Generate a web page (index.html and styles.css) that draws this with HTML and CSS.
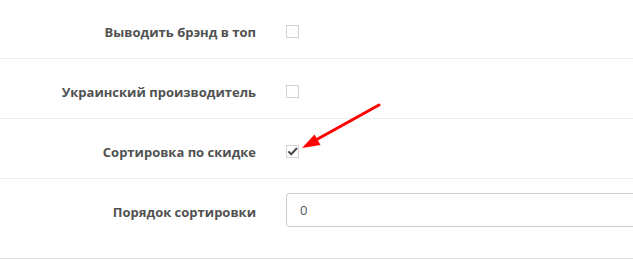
FILE: index.html
```html
<!DOCTYPE html>
<html lang="ru">
<head>
<meta charset="utf-8">
<link rel="stylesheet" href="styles.css">
</head>
<body>
<div class="form">
  <div class="row row-first">
    <label class="label">Выводить брэнд в топ</label>
    <div class="field"><span class="box"></span></div>
  </div>
  <div class="row">
    <label class="label">Украинский производитель</label>
    <div class="field"><span class="box"></span></div>
  </div>
  <div class="row">
    <label class="label">Сортировка по скидке</label>
    <div class="field"><span class="box checked"><svg viewBox="0 0 13 13" width="13" height="13"><path d="M2.4 6.4 L5.2 9.3 L11 3" fill="none" stroke="#4a4a4a" stroke-width="2"/></svg></span></div>
  </div>
  <div class="row row-last">
    <label class="label">Порядок сортировки</label>
    <div class="field field-clip"><div class="input">0</div></div>
  </div>
</div>
<svg class="arrow" width="633" height="259" viewBox="0 0 633 259">
  <line x1="379" y1="105" x2="314" y2="141" stroke="#f00" stroke-width="3" stroke-linecap="round"/>
  <polygon points="302,148 314.5,134.5 320.5,145" fill="#f00"/>
</svg>
</body>
</html>
```

FILE: styles.css
```css
html, body {
  margin: 0;
  padding: 0;
  background: #fff;
  overflow: hidden;
}
body {
  position: relative;
  width: 633px;
  height: 259px;
  font-family: "Open Sans", "DejaVu Sans", sans-serif;
}
.form {
  display: flex;
  flex-direction: column;
}
.row {
  display: flex;
  align-items: flex-start;
  padding: 14px 0;
  min-height: 31px;
  border-bottom: 1px solid #ededed;
}
.row-first {
  padding-top: 13px;
}
.row-last {
  padding-bottom: 31px;
  border-bottom-color: #dcdcdc;
}
.label {
  flex: 0 0 256px;
  padding: 9px 15px 0 0;
  text-align: right;
  font-size: 13px;
  line-height: 20px;
  font-weight: 700;
  color: #515151;
}
.field {
  padding-left: 15px;
  flex: 1 1 auto;
  min-width: 0;
}
.field-clip {
  overflow: hidden;
}
.box {
  display: block;
  width: 11px;
  height: 11px;
  margin-top: 12px;
  border: 1px solid #d2d2d2;
  background: #fff;
  position: relative;
}
.box svg {
  position: absolute;
  left: -1px;
  top: -1px;
}
.input {
  width: 400px;
  height: 34px;
  box-sizing: border-box;
  border: 1px solid #ccc;
  border-radius: 3px;
  padding: 6px 13px;
  font-size: 13px;
  line-height: 20px;
  color: #555;
}
.arrow {
  position: absolute;
  left: 0;
  top: 0;
  pointer-events: none;
}
```
